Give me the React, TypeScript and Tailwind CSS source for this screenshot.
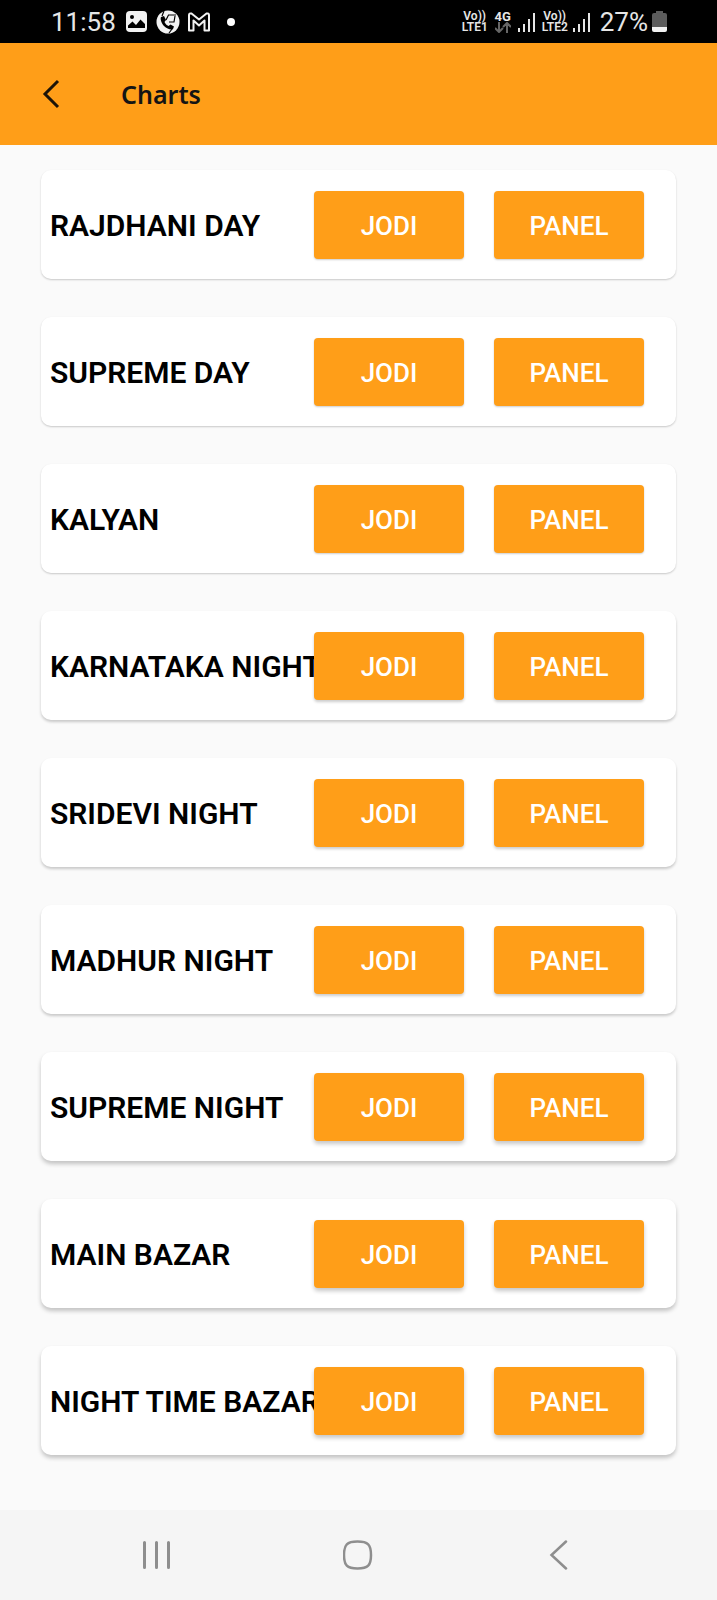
import React from 'react';

type Market = {
  id: number;
  name: string;
  shadow: string;
};

// Cards further down the list cast a deeper shadow
const SHADOW_LOW = 'shadow-[0_1px_2px_rgba(0,0,0,0.2)]';
const SHADOW_MID = 'shadow-[0_2px_3px_rgba(0,0,0,0.2)]';
const SHADOW_HIGH = 'shadow-[0_3px_4px_rgba(0,0,0,0.22)]';

const markets: Market[] = [
  { id: 1, name: 'RAJDHANI DAY', shadow: SHADOW_LOW },
  { id: 2, name: 'SUPREME DAY', shadow: SHADOW_LOW },
  { id: 3, name: 'KALYAN', shadow: SHADOW_LOW },
  { id: 4, name: 'KARNATAKA NIGHT', shadow: SHADOW_MID },
  { id: 5, name: 'SRIDEVI NIGHT', shadow: SHADOW_MID },
  { id: 6, name: 'MADHUR NIGHT', shadow: SHADOW_MID },
  { id: 7, name: 'SUPREME NIGHT', shadow: SHADOW_HIGH },
  { id: 8, name: 'MAIN BAZAR', shadow: SHADOW_HIGH },
  { id: 9, name: 'NIGHT TIME BAZAR', shadow: SHADOW_HIGH },
];

const SignalIcon: React.FC = () => (
  <svg width="19" height="22" viewBox="0 0 19 22" fill="#e6e6e6">
    <rect x="0" y="17" width="2" height="4" />
    <rect x="5" y="13" width="2" height="8" />
    <rect x="10" y="8" width="2" height="13" />
    <rect x="15" y="2" width="2" height="19" />
  </svg>
);

const VolteLabel: React.FC<{ sim: string }> = ({ sim }) => (
  <span className="flex w-[26px] flex-col items-center text-[12px] leading-[11px] font-semibold">
    <span>Vo))</span>
    <span>{sim}</span>
  </span>
);

const StatusBar: React.FC = () => (
  <div className="flex h-[43px] items-center justify-between bg-black pl-[51px] pr-[50px] text-[#e6e6e6]">
    <div className="flex items-center">
      <span className="w-[75px] text-[26px] leading-7">11:58</span>
      {/* Gallery */}
      <svg width="22" height="22" viewBox="0 0 22 22" className="mr-2">
        <rect x="0" y="0" width="21" height="21" rx="4" fill="#f2f2f2" />
        <circle cx="6" cy="6" r="2" fill="#000" />
        <path d="M2 17V14.500L6.500 10.500L10 14L14.500 8.500L19 13V17Z" fill="#000" />
      </svg>
      {/* Call in browser */}
      <svg width="24" height="24" viewBox="0 0 24 24" className="mr-[7px]">
        <circle cx="12" cy="12" r="11.500" fill="#f2f2f2" />
        <path
          d="M5 7L8 6L10 10L8.500 12C9.500 14 10.500 15 12.500 16L14.500 14.500L18 16.500L17 19C15.500 20.500 11 19 8 16C5.500 13.500 4 9 5 7Z"
          fill="#000"
        />
        <path d="M8 1L6 6M10 10L12.500 5H20M19 6L18 12H13M16 19L13 23" fill="none" stroke="#000" strokeWidth="1.200" />
      </svg>
      {/* Gmail */}
      <svg width="24" height="22" viewBox="0 0 24 22" className="mr-4">
        <path
          d="M2 19.500V4Q2 2 4.500 2.500L12 8.500L19.500 2.500Q22 2 22 4V19.500H17.500V9.500L12 14.500L6.500 9.500V19.500Z"
          fill="none"
          stroke="#f2f2f2"
          strokeWidth="2"
          strokeLinejoin="round"
        />
      </svg>
      <span className="h-2 w-2 rounded-full bg-white" />
    </div>

    <div className="flex items-center">
      <VolteLabel sim="LTE1" />
      <span className="mx-[6px] flex w-[18px] flex-col items-center text-[13px] leading-[11px] font-bold">
        4G
        <svg width="16" height="11" viewBox="0 0 16 11" fill="none" stroke="#666" strokeWidth="2">
          <path d="M4 0V9M0 6L4 10L8 6M12 11V2M8 5L12 1L16 5" />
        </svg>
      </span>
      <SignalIcon />
      <span className="mx-[5px]">
        <VolteLabel sim="LTE2" />
      </span>
      <SignalIcon />
      <span className="ml-2 text-[26px] leading-7">27%</span>
      <svg width="15" height="22" viewBox="0 0 15 22" className="ml-1">
        <path d="M4 0H11V2H13Q15 2 15 4V16H0V4Q0 2 2 2H4Z" fill="#5c5c5c" />
        <path d="M0 16H15V19Q15 21 13 21H2Q0 21 0 19Z" fill="#f2f2f2" />
      </svg>
    </div>
  </div>
);

const Header: React.FC = () => (
  <header className="flex h-[102px] items-center bg-[#ff9e18] pl-10">
    <button type="button" aria-label="Back" className="flex h-12 w-[81px] items-center">
      <svg width="24" height="30" viewBox="0 0 24 30" fill="none" stroke="#1c1408" strokeWidth="3">
        <path d="M18 2L5 15L18 28" />
      </svg>
    </button>
    <h1 className="font-['Noto_Sans',sans-serif] text-[25px] leading-8 font-semibold text-[#141414]">Charts</h1>
  </header>
);

const ChartButton: React.FC<{ label: string; shadow: string }> = ({ label, shadow }) => (
  <button
    type="button"
    className={`h-[68px] w-[150px] shrink-0 rounded-[4px] bg-[#ff9e18] pt-0.5 text-[26px] leading-8 font-medium text-white ${shadow}`}
  >
    {label}
  </button>
);

const MarketCard: React.FC<{ market: Market }> = ({ market }) => (
  <li className={`flex h-[109px] items-center rounded-[10px] bg-white pl-[9px] pr-8 ${market.shadow}`}>
    <h2 className="min-w-0 flex-1 overflow-hidden pt-0.5 text-[30px] leading-9 font-semibold whitespace-nowrap text-black">
      {market.name}
    </h2>
    <div className="flex gap-[30px]">
      <ChartButton label="JODI" shadow={market.shadow} />
      <ChartButton label="PANEL" shadow={market.shadow} />
    </div>
  </li>
);

const NavigationBar: React.FC = () => (
  <nav className="grid h-[90px] grid-cols-3 items-center bg-[#f5f5f5] px-14">
    <button type="button" aria-label="Recent apps" className="flex justify-center">
      <svg width="30" height="30" viewBox="0 0 30 30" fill="none" stroke="#8e8e8e" strokeWidth="3" strokeLinecap="round">
        <path d="M2.500 2.500V27.500M14.500 2.500V27.500M26.500 2.500V27.500" />
      </svg>
    </button>
    <button type="button" aria-label="Home" className="flex justify-center">
      <svg width="30" height="30" viewBox="0 0 30 30" fill="none" stroke="#8e8e8e" strokeWidth="2.500">
        <path d="M14.500 1.500C25 1.500 28 4.500 28 15S25 28.500 14.500 28.500S1 25.500 1 15S4 1.500 14.500 1.500Z" />
      </svg>
    </button>
    <button type="button" aria-label="Go back" className="flex justify-center">
      <svg width="30" height="30" viewBox="0 0 30 30" fill="none" stroke="#8e8e8e" strokeWidth="2.500" strokeLinecap="round">
        <path d="M21 1.500L6.500 15L21 28.500" />
      </svg>
    </button>
  </nav>
);

const App: React.FC = () => {
  return (
    <div className="flex min-h-screen flex-col bg-[#fafafa] font-[Roboto,sans-serif]">
      <StatusBar />
      <Header />
      <main className="flex-1 px-[41px] pt-[25px]">
        <ul className="flex flex-col gap-[38px]">
          {markets.map((market) => (
            <MarketCard key={market.id} market={market} />
          ))}
        </ul>
      </main>
      <NavigationBar />
    </div>
  );
};

export default App;
